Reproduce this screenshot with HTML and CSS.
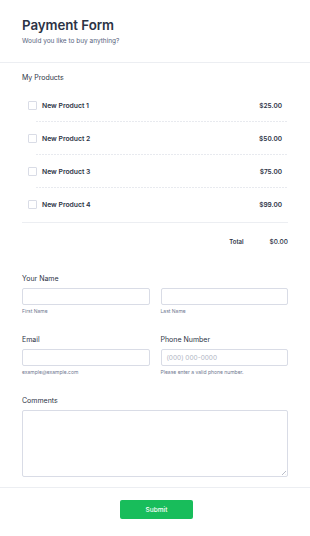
FILE: index.html
```html
<!DOCTYPE html>
<html>
<head>
<meta charset="utf-8">
<link rel="stylesheet" href="styles.css">
</head>
<body>
<div class="form">
  <header class="head">
    <h1 class="title">Payment Form</h1>
    <p class="subtitle">Would you like to buy anything?</p>
  </header>
  <section class="products">
    <div class="label">My Products</div>
    <ul class="plist">
      <li class="prow"><span class="check"></span><span class="pname">New Product 1</span><span class="price">$25.00</span></li>
      <li class="prow"><span class="check"></span><span class="pname">New Product 2</span><span class="price">$50.00</span></li>
      <li class="prow"><span class="check"></span><span class="pname">New Product 3</span><span class="price">$75.00</span></li>
      <li class="prow"><span class="check"></span><span class="pname">New Product 4</span><span class="price">$99.00</span></li>
    </ul>
    <div class="total"><span class="tlabel">Total</span><span class="tval">$0.00</span></div>
  </section>
  <section class="field">
    <div class="label">Your Name</div>
    <div class="two">
      <div class="col"><div class="input"></div><div class="sub">First Name</div></div>
      <div class="col"><div class="input"></div><div class="sub">Last Name</div></div>
    </div>
  </section>
  <section class="field two">
    <div class="col"><div class="label">Email</div><div class="input"></div><div class="sub">example@example.com</div></div>
    <div class="col"><div class="label">Phone Number</div><div class="input"><span class="ph">(000) 000-0000</span></div><div class="sub">Please enter a valid phone number.</div></div>
  </section>
  <section class="field">
    <div class="label">Comments</div>
    <div class="textarea"><span class="grip"></span></div>
  </section>
  <footer class="foot">
    <button class="submit">Submit</button>
  </footer>
</div>
</body>
</html>
```
FILE: styles.css
```css
* { box-sizing: border-box; }
html, body { margin: 0; padding: 0; background: #fff; }
body { font-family: Inter, "Noto Sans", sans-serif; color: #2c3345; width: 310px; }
.head { padding: 17px 22px 0; height: 63px; border-bottom: 1px solid #eceef2; }
.title { margin: 0; font-size: 13.3px; line-height: 17px; font-weight: 600; color: #2c3345; letter-spacing: -0.05px; }
.subtitle { margin: 3px 0 0; font-size: 6.5px; line-height: 8px; color: #57647e; }
.products { padding: 10px 22px 0; }
.label { font-size: 7px; line-height: 9px; color: #2c3345; }
.plist { list-style: none; margin: 7px 0 0; padding: 0; }
.prow { position: relative; display: flex; align-items: center; height: 33px; padding: 0 6px; }
.prow::after { content: ""; position: absolute; left: 14px; right: 0; bottom: 0; height: 1px; background: linear-gradient(to right, #e8eaef 2px, transparent 2px) 0 0 / 3px 1px repeat-x; }
.prow:last-child::after { display: none; }
.check { width: 9px; height: 9px; border: 1px solid #d9dce6; border-radius: 1px; margin-right: 5px; }
.pname { flex: 1; font-size: 6.8px; font-weight: 600; color: #2c3345; }
.price { font-size: 6.5px; font-weight: 600; color: #2c3345; }
.total { display: flex; justify-content: flex-end; align-items: center; height: 38px; border-top: 1px solid #eceef2; margin-top: 1px; font-size: 6px; font-weight: 600; color: #2c3345; }
.tlabel { margin-right: 26px; }
.tval { font-size: 6.5px; font-weight: 500; }
.field { padding: 0 22px; }
.products + .field { margin-top: 14px; }
.field .label { margin-bottom: 5px; }
.two { display: flex; gap: 11px; }
.col { flex: 1; min-width: 0; }
.input { height: 17px; border: 1px solid #d9dce6; border-radius: 2px; display: flex; align-items: center; padding: 0 5px; }
.ph { font-size: 6.5px; color: #b0b5c3; }
.sub { font-size: 5px; line-height: 6px; color: #6f7890; margin-top: 3px; }
.field.two { margin-top: 21px; }
.field.two .label { margin-bottom: 5px; }
.field.two + .field { margin-top: 21px; }
.textarea { position: relative; height: 67px; border: 1px solid #d9dce6; border-radius: 2px; }
.grip { position: absolute; right: 1px; bottom: 1px; width: 4px; height: 4px; background: linear-gradient(135deg, transparent 45%, #b8bcc8 50%, transparent 60%, transparent 75%, #b8bcc8 80%, transparent 90%); }
.foot { margin-top: 10px; border-top: 1px solid #eceef2; display: flex; justify-content: center; padding-top: 12px; }
.submit { width: 73px; height: 19px; margin-left: 3px; border: 0; border-radius: 2px; background: #18bd5b; color: #fff; font-family: Inter, sans-serif; font-size: 6.5px; font-weight: 500; }
```
